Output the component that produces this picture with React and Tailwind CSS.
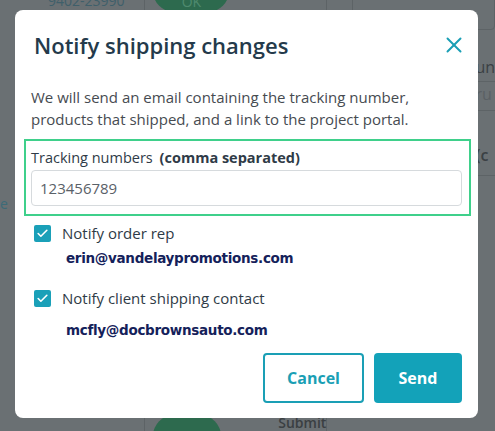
import { Check, X } from 'lucide-react'

function Backdrop() {
  return (
    <div className="flex h-full w-full">
      <div className="flex w-[148px] flex-col border-r border-[#5d6366] pl-[48px]">
        <span className="-mt-[9px] text-[14px] leading-[20px] text-[#3f5f6a]">9402-23990</span>
        <span className="-ml-[48px] mt-[182px] text-[14px] text-[#3c6b78]">e</span>
      </div>
      <div className="flex w-[182px] flex-col justify-between border-r border-[#5d6366] pl-[8px]">
        <div className="-mt-[30px] h-[42px] w-[76px] rounded-full bg-[#2d6a4e] pt-[22px] text-center text-[14px] leading-[20px] text-[#4f8a6e]">OK</div>
        <div className="-mb-[26px] flex items-start gap-[57px]">
          <div className="mt-[3px] h-[42px] w-[76px] rounded-full bg-[#2d6a4e]" />
          <span className="text-[14px] font-semibold text-[#3a3f42]">Submit</span>
        </div>
      </div>
      <div className="flex flex-1 flex-col pl-[25px] text-[16px] text-[#3a4044]">
        <div className="-mt-[6px] h-[36px] rounded-[4px] border border-[#5d6366]" />
        <div className="-ml-[25px] mt-[25px] border-b border-[#5d6366] pb-[2px] pl-[148px]">un</div>
        <div className="-ml-[25px] border-b border-[#5d6366] pb-[4px] pl-[148px] text-[#5a6064]">ru</div>
        <div className="-ml-[25px] mt-[32px] border-b border-[#5d6366] pb-[8px] pl-[148px] font-semibold">(c</div>
      </div>
    </div>
  )
}

function Option({ label, email, gap }) {
  return (
    <div className="flex flex-col">
      <label className="flex h-[20px] items-center gap-[11px] pl-[10px]">
        <span className="flex h-[17px] w-[17px] items-center justify-center rounded-[2px] bg-[#1aa0b8]">
          <Check size={13} strokeWidth={3} className="text-white" />
        </span>
        <span className="text-[15px] font-medium text-[#2f3b47]">{label}</span>
      </label>
      <span className={`${gap} pl-[42px] text-[13.5px] font-bold leading-[20px] text-[#14215a]`} style={{ fontFamily: '"DejaVu Sans", sans-serif', letterSpacing: '-0.3px' }}>{email}</span>
    </div>
  )
}

export default function App() {
  return (
    <div className="relative h-[431px] w-[495px] overflow-hidden bg-[#6a7073]" style={{ fontFamily: '"Open Sans", "Noto Sans", sans-serif' }}>
      <Backdrop />
      {/* dialog over the dimmed page */}
      <div className="absolute inset-0 pl-[15px] pt-[10px]">
        <div className="relative flex h-[408px] w-[463px] flex-col rounded-[8px] bg-white pl-[9px] pr-[7px] pt-[20px]">
          <div className="flex items-center justify-between pl-[10px] pr-[4px]">
            <h2 className="text-[22px] font-semibold leading-[30px] text-[#243a4b]">Notify shipping changes</h2>
            <X size={26} strokeWidth={1.8} className="text-[#1a9fb5]" />
          </div>
          <p className="mt-[26px] pl-[7px] text-[15px] font-medium leading-[22px] text-[#464b51]">
            We will send an email containing the tracking number, products that shipped, and a link to the project portal.
          </p>
          <div className="mt-[9px] border-2 border-[#3fd08b] pb-[8px] pl-[5px] pr-[7px] pt-[7px]">
            <div className="text-[14.5px] leading-[20px] text-[#2f3b47]">
              Tracking numbers <span className="ml-[3px] font-bold">(comma separated)</span>
            </div>
            <div className="mt-[2px] flex h-[36px] items-center rounded-[4px] border border-[#d6dadd] px-[8px] text-[15px] text-[#5a6168]">
              123456789
            </div>
          </div>
          <div className="mt-[7px] flex flex-col gap-[20px]">
            <Option label="Notify order rep" email="erin@vandelaypromotions.com" gap="mt-[5px]" />
            <Option label="Notify client shipping contact" email="mcfly@docbrownsauto.com" gap="mt-[12px]" />
          </div>
          <div className="mt-[13px] flex justify-end gap-[10px] pr-[9px]">
            <button className="h-[50px] w-[101px] rounded-[4px] border-2 border-[#1a9fb5] text-[16px] font-bold text-[#1a9fb5]">Cancel</button>
            <button className="h-[50px] w-[88px] rounded-[4px] bg-[#13a2b9] text-[16px] font-bold text-white">Send</button>
          </div>
        </div>
      </div>
    </div>
  )
}
